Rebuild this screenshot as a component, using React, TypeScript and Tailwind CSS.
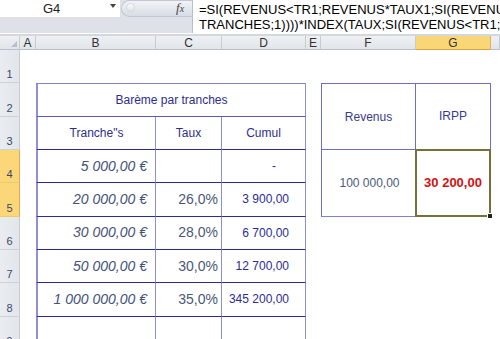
import React from "react";

const colHeaders = [
  { l: "", c: "col-start-1", corner: true },
  { l: "A", c: "col-start-2" },
  { l: "B", c: "col-start-3" },
  { l: "C", c: "col-start-4" },
  { l: "D", c: "col-start-5" },
  { l: "E", c: "col-start-6" },
  { l: "F", c: "col-start-7" },
  { l: "G", c: "col-start-8", sel: true },
  { l: "", c: "col-start-9" },
];

const rowHeaders = [
  { n: 1, r: "row-start-2" },
  { n: 2, r: "row-start-3" },
  { n: 3, r: "row-start-4" },
  { n: 4, r: "row-start-5", sel: true },
  { n: 5, r: "row-start-6", sel: true },
  { n: 6, r: "row-start-7" },
  { n: 7, r: "row-start-8" },
  { n: 8, r: "row-start-9" },
  { n: 9, r: "row-start-10" },
];

const dataRows = [
  { r: "row-start-5", b: "5 000,00 €", c: "", d: "-" },
  { r: "row-start-6", b: "20 000,00 €", c: "26,0%", d: "3 900,00" },
  { r: "row-start-7", b: "30 000,00 €", c: "28,0%", d: "6 700,00" },
  { r: "row-start-8", b: "50 000,00 €", c: "30,0%", d: "12 700,00" },
  { r: "row-start-9", b: "1 000 000,00 €", c: "35,0%", d: "345 200,00" },
];

export default function App() {
  return (
    <div className="w-[500px] h-[339px] overflow-hidden bg-white font-['Liberation_Sans',Arial,sans-serif]">
      {/* Formula bar */}
      <div className="flex h-[33px]">
        <div className="w-[192px] flex flex-col bg-[#dee2e8]">
          <div className="flex h-[17px]">
            <div className="relative w-[120px] h-full bg-white flex items-center">
              <span className="absolute left-[43px] top-[1px] text-[13px] leading-[15px] text-[#222]">G4</span>
              <span className="absolute left-[110px] top-[4px] w-0 h-0 border-l-[3px] border-r-[3px] border-t-[4px] border-l-transparent border-r-transparent border-t-[#444]"></span>
            </div>
            <div className="flex-1 flex items-center relative">
              <div className="absolute left-[1px] top-[0px] h-[17px] right-0 rounded-l-full bg-gradient-to-b from-[#f1f3f6] to-[#d8dde4] border border-r-0 border-[#c2c8d1]"></div>
              <div className="absolute left-[6px] top-[3px] w-[9px] h-[9px] rounded-full bg-gradient-to-b from-[#fafbfc] to-[#dfe3e8] border border-[#d4d9df]"></div>
              <span className="absolute left-[56px] top-[0px] text-[13px] leading-[15px] italic font-['Liberation_Serif',serif] text-[#444]">
                f<span className="text-[10px]">x</span>
              </span>
            </div>
          </div>
          <div className="flex-1"></div>
        </div>
        <div className="flex-1 bg-white border-l border-[#b7bfca] pl-[6px] pt-[2px] text-[13px] leading-[15px] text-black overflow-hidden whitespace-nowrap">
          <div>=SI(REVENUS&lt;TR1;REVENUS*TAUX1;SI(REVENUS&lt;TR2;</div>
          <div>TRANCHES;1))))*INDEX(TAUX;SI(REVENUS&lt;TR1;1;</div>
        </div>
      </div>
      <div className="h-[3px] border-t border-white bg-[#d3d8df]"></div>

      {/* Sheet */}
      <div className="grid grid-cols-[20px_16px_120px_66px_84px_15px_95px_75px_1fr] grid-rows-[14px_repeat(9,33.333px)]">
        {colHeaders.map((h, i) => (
          <div
            key={"c" + i}
            className={
              h.c +
              " row-start-1 relative flex items-center justify-center text-[12px] leading-none border-r border-b " +
              (h.sel
                ? "bg-[#f9d777] border-r-[#e2b458] border-b-[#dba23c] text-[#333]"
                : "bg-gradient-to-b from-[#eef0f3] to-[#e1e5ea] border-r-[#c6ccd4] border-b-[#b8bfc8] text-[#333]")
            }
          >
            {h.l}
            {h.corner && (
              <span className="absolute right-[2px] bottom-[2px] w-0 h-0 border-l-[6px] border-t-[6px] border-l-transparent border-t-transparent border-b-0 border-r-[0px] border-b-[#b9bfc8]"
                style={{ borderBottomWidth: 6, borderBottomStyle: "solid" }}
              ></span>
            )}
          </div>
        ))}

        {rowHeaders.map((h) => (
          <div
            key={"r" + h.n}
            className={
              h.r +
              " col-start-1 flex items-end justify-center pb-[2px] text-[11px] leading-none border-r border-b " +
              (h.sel
                ? "bg-[#fbd779] border-r-[#e4ad48] border-b-[#f1c96a] text-[#3c4866]"
                : "bg-gradient-to-r from-[#e9ecf0] to-[#e2e6eb] border-r-[#c6ccd4] border-b-[#ccd1d8] text-[#3c4866]")
            }
          >
            {h.n}
          </div>
        ))}

        {/* Table 1: Barème */}
        <div className="col-start-3 col-span-3 row-start-3 flex items-center justify-center text-[12px] text-[#2d2d8e] border-t border-t-[#8080cc] border-l-2 border-l-[#8f8fd3] border-r border-r-[#8f8fd3] border-b border-b-[#5a5ab8]">
          Barème par tranches
        </div>
        <div className="col-start-3 row-start-4 flex items-center justify-center text-[12px] text-[#2d2d8e] border-l-2 border-l-[#8f8fd3] border-r border-r-[#8f8fd3] border-b border-b-[#2a2a98]">
          Tranche"s
        </div>
        <div className="col-start-4 row-start-4 flex items-center justify-center text-[12px] text-[#2d2d8e] border-r border-r-[#8f8fd3] border-b border-b-[#2a2a98]">
          Taux
        </div>
        <div className="col-start-5 row-start-4 flex items-center justify-center text-[12px] text-[#2d2d8e] border-r border-r-[#8f8fd3] border-b border-b-[#2a2a98]">
          Cumul
        </div>

        {dataRows.map((d, i) => (
          <React.Fragment key={"d" + i}>
            <div className={d.r + " col-start-3 flex items-center justify-end pr-[8px] text-[14px] italic text-[#43527a] border-l-2 border-l-[#8f8fd3] border-r border-r-[#8f8fd3] border-b border-b-[#2a2a98]"}>
              {d.b}
            </div>
            <div className={d.r + " col-start-4 flex items-center justify-end pr-[3px] text-[14px] text-[#4a5878] border-r border-r-[#8f8fd3] border-b border-b-[#2a2a98]"}>
              {d.c}
            </div>
            <div className={d.r + " col-start-5 flex items-center justify-end text-[12px] text-[#2b2b96] border-r border-r-[#8f8fd3] border-b border-b-[#2a2a98] " + (d.d === "-" ? "pr-[29px]" : "pr-[16px]")}>
              {d.d}
            </div>
          </React.Fragment>
        ))}

        <div className="col-start-3 row-start-10 border-l-2 border-l-[#8f8fd3] border-r border-r-[#8f8fd3]"></div>
        <div className="col-start-4 row-start-10 border-r border-r-[#8f8fd3]"></div>
        <div className="col-start-5 row-start-10 border-r border-r-[#8f8fd3]"></div>

        {/* Table 2: Revenus / IRPP */}
        <div className="col-start-7 row-start-3 row-span-2 flex items-center justify-center text-[12px] text-[#3a3a8c] border border-[#6e6ec4]">
          Revenus
        </div>
        <div className="col-start-8 row-start-3 row-span-2 flex items-center justify-center pb-[2px] text-[12px] text-[#3a3a8c] border-t border-r border-b border-[#6e6ec4]">
          IRPP
        </div>
        <div className="col-start-7 row-start-5 row-span-2 flex items-center justify-center pl-[2px] text-[12px] text-[#4b5a80] border-l border-r border-b border-l-[#6e6ec4] border-r-[#6e6ec4] border-b-[#8080cc]">
          100 000,00
        </div>
        <div className="col-start-8 row-start-5 row-span-2 -ml-px -mt-px relative flex items-center justify-center text-[13px] font-bold text-[#d41010] border-2 border-[#74723a]">
          30 200,00
          <span className="absolute -right-[4px] -bottom-[4px] w-[6px] h-[6px] bg-[#222] border border-white"></span>
        </div>
      </div>
    </div>
  );
}
